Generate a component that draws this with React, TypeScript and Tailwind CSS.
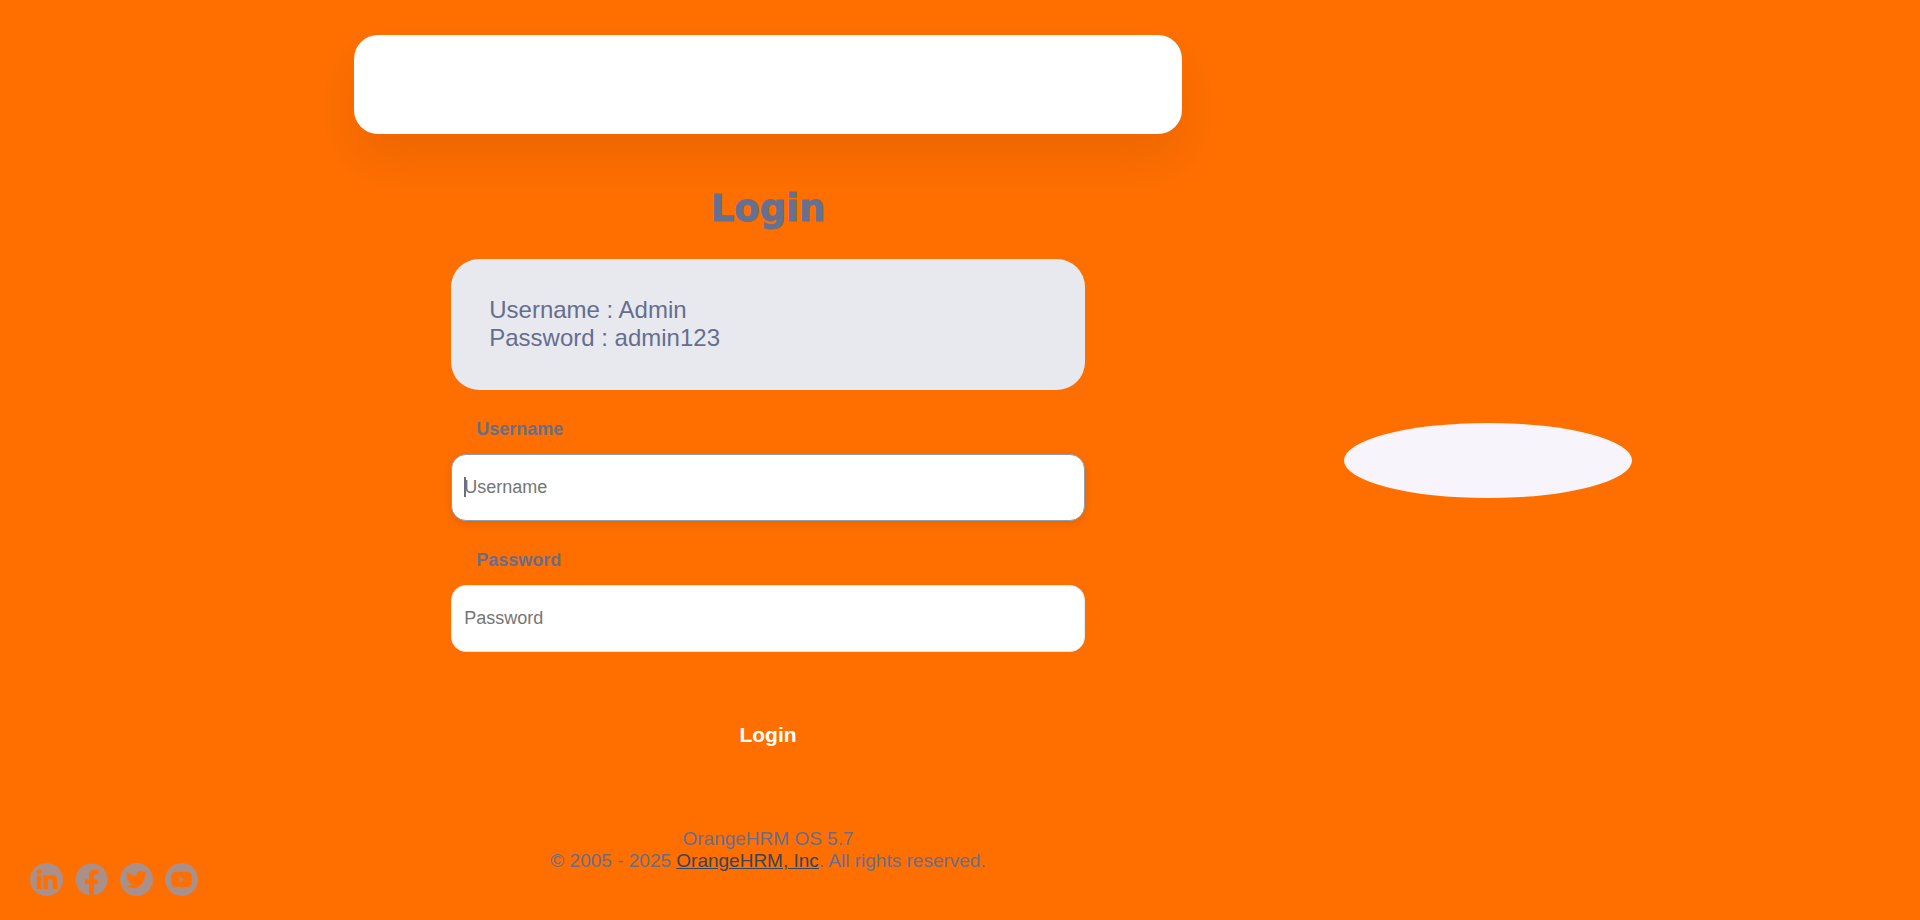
import React from "react";
import { FaFacebook, FaTwitter } from "react-icons/fa";

const fieldClass =
  "block h-[67px] w-full rounded-[15px] border bg-white px-3 text-[18px] text-[#666e8e] placeholder:text-[#757575] placeholder:opacity-100 outline-none";

function SocialLink({ label, solid, children }: { label: string; solid?: boolean; children: React.ReactNode }) {
  return (
    <a
      href="#"
      aria-label={label}
      className={
        solid
          ? "flex size-[33px] items-center justify-center text-[#aa9089]"
          : "flex size-[33px] items-center justify-center rounded-full bg-[#aa9089] text-[#ff6f00]"
      }
    >
      {children}
    </a>
  );
}

function LinkedInGlyph() {
  return (
    <svg viewBox="0 0 33 33" className="size-full" fill="currentColor" aria-hidden="true">
      <circle cx="9" cy="9" r="2.4" />
      <path d="M6.800 12.400h4.600V26h-4.600zM13.300 12.400h4.400v1.700c.7-1.200 2.200-2 4.100-2 4.200 0 5.300 2.600 5.300 6.400V26h-4.600v-6.600c0-2-.3-3.500-2.200-3.500-2 0-2.400 1.500-2.400 3.400V26h-4.600z" />
    </svg>
  );
}

function YouTubeGlyph() {
  return (
    <svg viewBox="0 0 33 33" className="size-full" fill="currentColor" fillRule="evenodd" aria-hidden="true">
      <path d="M9.2 9.2c3.6-.6 11-.6 14.6 0 1.700.3 2.500 1 2.700 2.600.4 3 .4 6.400 0 9.400-.2 1.600-1 2.300-2.700 2.600-3.600.5-11 .5-14.600 0-1.700-.3-2.500-1-2.700-2.600-.4-3-.4-6.400 0-9.400.2-1.600 1-2.300 2.700-2.600zM14.200 13.400v6.200l5.400-3.100z" />
    </svg>
  );
}

export default function App() {
  return (
    <div className="relative min-h-screen bg-[#ff6f00] font-['Liberation_Sans',Arial,sans-serif] text-[#666e8e]">
      <div className="grid min-h-screen grid-cols-[10%_60%_15%_15%]">
        <main className="col-start-2 flex flex-col items-center pt-[35px]">
          <div className="h-[99px] w-full max-w-[828px] rounded-3xl bg-white shadow-[0_24px_50px_rgba(0,0,0,0.08)]" />

          <div className="w-[55%]">
            <h1 className="mt-[50px] text-center font-['DejaVu_Sans',sans-serif] text-[37px] leading-[50px] font-bold text-[#68708f] [-webkit-text-stroke:1px_#68708f]">
              Login
            </h1>

            <div className="mt-[25px] h-[131px] rounded-[28px] bg-[#e8e9ef] px-[38px] pt-[37px] text-2xl leading-7">
              <p>Username : Admin</p>
              <p>Password : admin123</p>
            </div>

            <form onSubmit={(e) => e.preventDefault()}>
              <label htmlFor="username" className="mt-[27px] block pl-[25px] text-[18px] leading-6 font-bold">
                Username
              </label>
              <div className="relative mt-[13px]">
                <input
                  id="username"
                  type="text"
                  placeholder="Username"
                  className={`${fieldClass} border-[#929baa] shadow-[0_3px_10px_rgba(0,0,0,0.1)]`}
                />
                <span className="absolute top-[23px] left-[13px] h-5 w-0.5 bg-[#666e8e]" />
              </div>

              <label htmlFor="password" className="mt-[27px] block pl-[25px] text-[18px] leading-6 font-bold">
                Password
              </label>
              <input
                id="password"
                type="password"
                placeholder="Password"
                className={`${fieldClass} mt-[13px] border-[#e8eaef]`}
              />

              <button type="submit" className="mt-[51px] h-16 w-full text-[21px] font-bold text-white">
                Login
              </button>
            </form>
          </div>

          <footer className="mt-[61px] text-center text-[19px] leading-[22px]">
            <p>OrangeHRM OS 5.7</p>
            <p>
              © 2005 - 2025{" "}
              <a href="#" className="text-[#38455d] underline">
                OrangeHRM, Inc
              </a>
              . All rights reserved.
            </p>
          </footer>
        </main>

        <div className="col-start-3 h-[75px] self-center rounded-[50%] bg-[#f7f5fb]" />
      </div>

      <nav aria-label="Social media" className="absolute bottom-6 left-[30px] flex gap-3">
        <SocialLink label="LinkedIn">
          <LinkedInGlyph />
        </SocialLink>
        <SocialLink label="Facebook" solid>
          <FaFacebook size={33} />
        </SocialLink>
        <SocialLink label="Twitter">
          <FaTwitter size={21} />
        </SocialLink>
        <SocialLink label="YouTube">
          <YouTubeGlyph />
        </SocialLink>
      </nav>
    </div>
  );
}
